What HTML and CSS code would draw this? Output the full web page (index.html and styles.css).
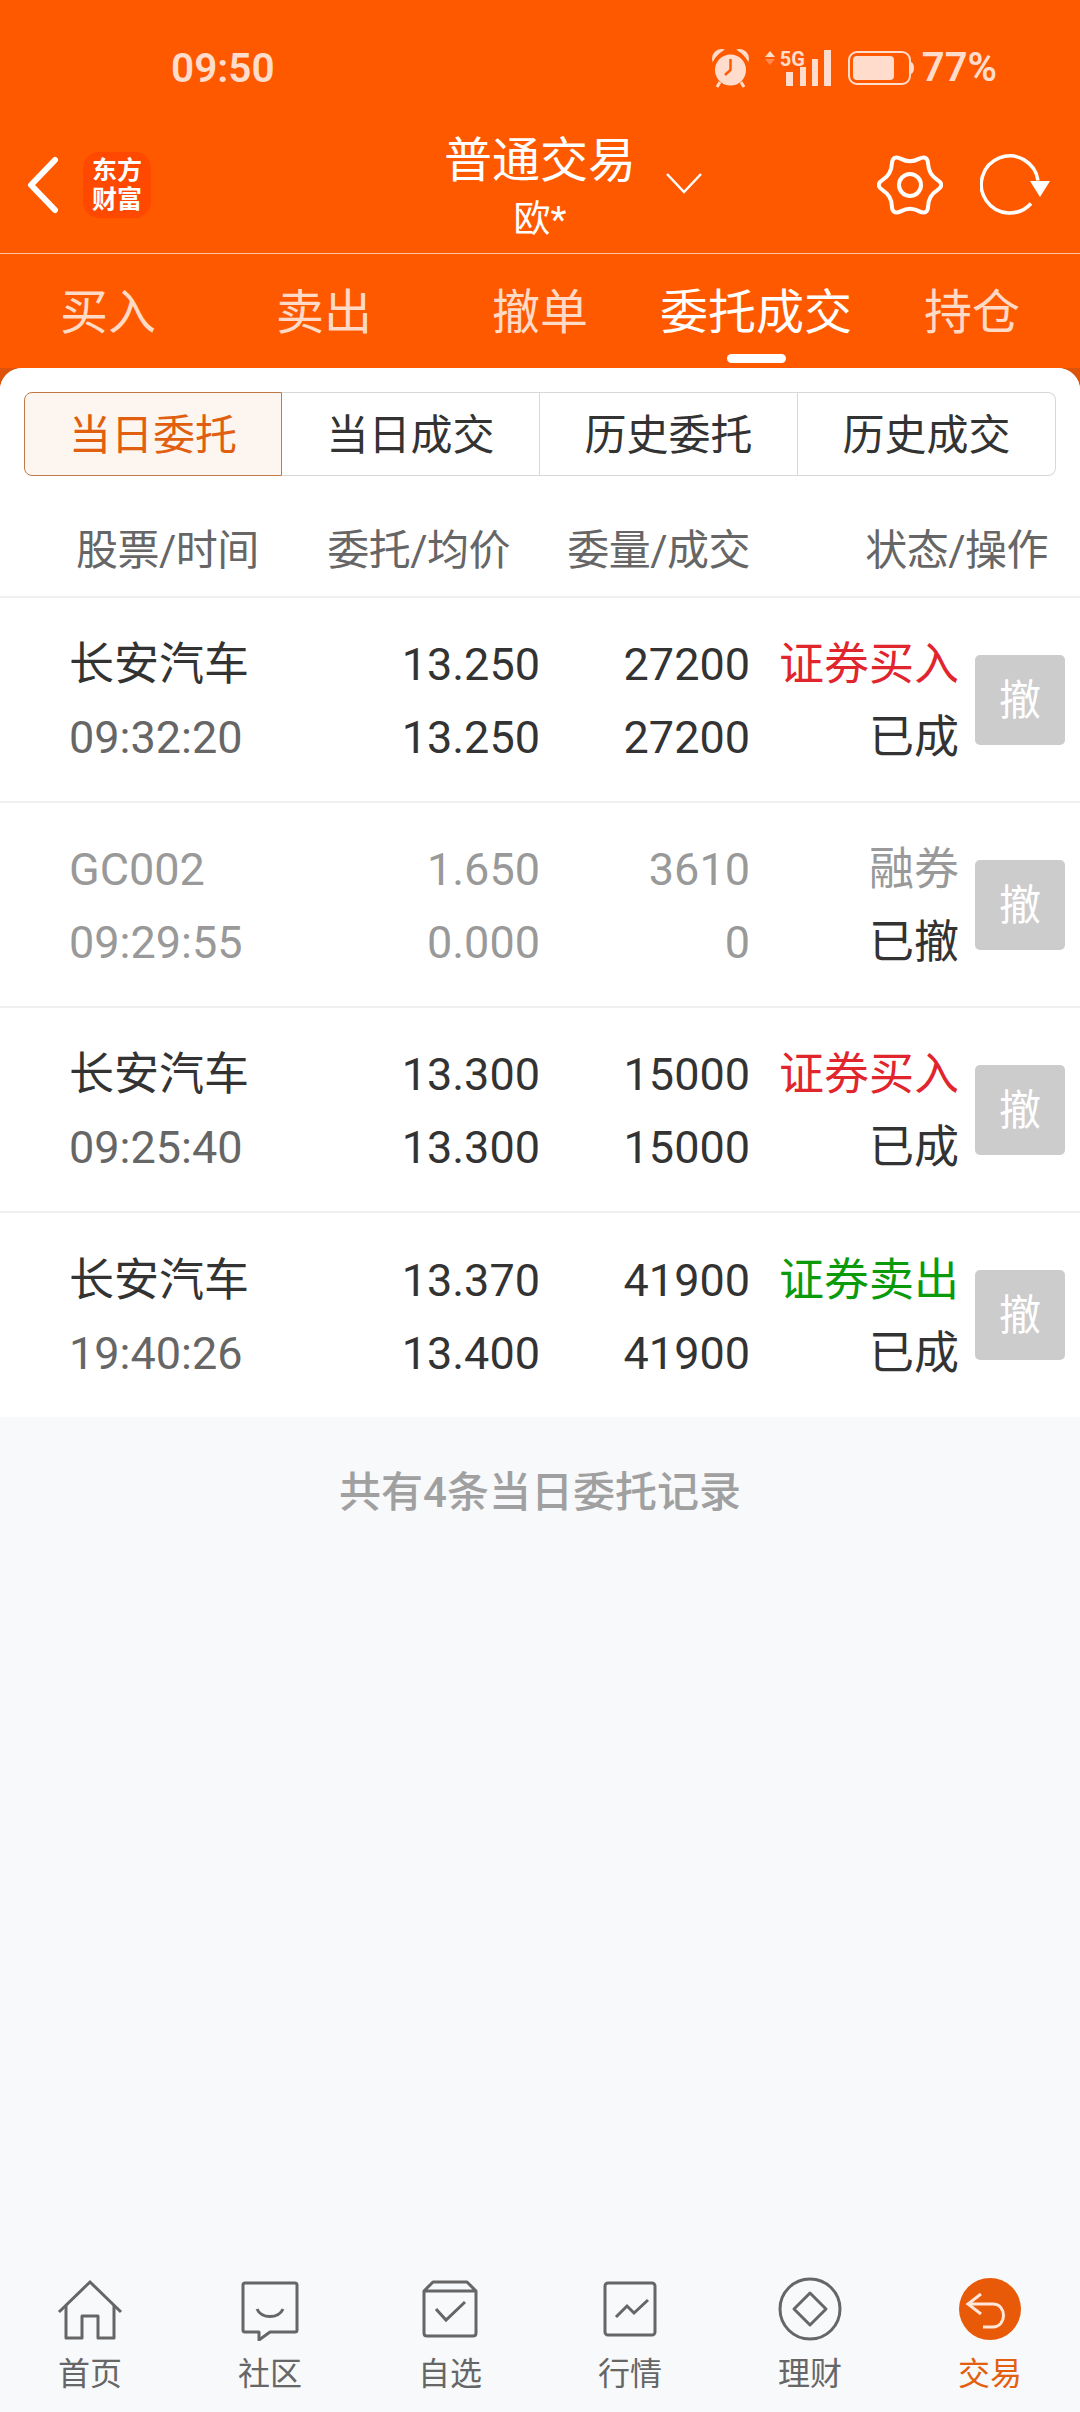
FILE: index.html
```html
<!DOCTYPE html>
<html lang="en">
<head>
    <meta charset="UTF-8">
    <title>普通交易</title>
    <link rel="stylesheet" href="styles.css">
</head>
<body>

<div class="app">
    <div class="top">
        <div class="status">
            <span class="time">09:50</span>
            <div class="status-icons">
                <svg width="37" height="39" viewBox="0 0 37 39">
                    <circle cx="18.5" cy="21" r="15.5" fill="#ffdccb"/>
                    <path d="M1 11 C0 5 5 0 11 1 C8 3 4 6 1 11 Z M36 11 C37 5 32 0 26 1 C29 3 33 6 36 11 Z" fill="#ffdccb" stroke="#ffdccb" stroke-width="1.5"/>
                    <path d="M8 33 L5 38 M29 33 L32 38" stroke="#ffdccb" stroke-width="3"/>
                    <path d="M18.5 10 V21 L13 26" fill="none" stroke="#ff5a00" stroke-width="2.5"/>
                </svg>
                <div class="signal">
                    <svg width="66" height="37" viewBox="0 0 66 37">
                        <path d="M0 7 L5 1 L10 7 Z" fill="#ffdccb"/>
                        <path d="M0 9 L5 15 L10 9 Z" fill="#ff8a4f"/>
                        <rect x="21" y="22" width="7" height="14" fill="#ffdccb"/>
                        <rect x="35" y="17" width="6" height="19" fill="#ffdccb"/>
                        <rect x="47" y="9" width="6" height="27" fill="#ffdccb"/>
                        <rect x="59" y="0" width="7" height="36" fill="#ffdccb"/>
                    </svg>
                    <span class="net">5G</span>
                </div>
                <svg width="67" height="34" viewBox="0 0 67 34">
                    <rect x="1" y="1" width="61" height="32" rx="8" fill="none" stroke="#ffdccb" stroke-width="2"/>
                    <rect x="5" y="5" width="41" height="24" rx="4" fill="#ffdccb"/>
                    <path d="M63 11 C67 12 67 22 63 23 Z" fill="#ffdccb"/>
                </svg>
                <span class="percent">77%</span>
            </div>
        </div>

        <div class="header">
            <div class="header-left">
                <svg width="34" height="58" viewBox="0 0 34 58">
                    <path d="M29 4 L5 29 L29 54" fill="none" stroke="#fff" stroke-width="6" stroke-linecap="round" stroke-linejoin="round"/>
                </svg>
                <div class="logo">东方<br>财富</div>
            </div>
            <div class="title">
                <div class="title-main">普通交易</div>
                <div class="title-sub">欧*</div>
            </div>
            <div class="header-right">
                <svg class="caret" width="38" height="22" viewBox="0 0 38 22">
                    <path d="M2 2 L19 20 L36 2" fill="none" stroke="#fff" stroke-width="2.5"/>
                </svg>
                <div class="header-icons">
                    <svg width="66" height="66" viewBox="0 0 66 66">
                        <path d="M60.06 38.37 Q68.5 33 60.06 27.63 Q51.62 22.25 51.18 12.26 Q50.75 2.26 41.88 6.88 Q33 11.5 24.12 6.88 Q15.25 2.26 14.82 12.26 Q14.38 22.25 5.94 27.63 Q-2.5 33 5.94 38.37 Q14.38 43.75 14.82 53.74 Q15.25 63.74 24.12 59.12 Q33 54.5 41.88 59.12 Q50.75 63.74 51.18 53.74 Q51.62 43.75 60.06 38.37 Z" fill="none" stroke="#fff" stroke-width="4"/>
                        <circle cx="33" cy="33" r="11" fill="none" stroke="#fff" stroke-width="4"/>
                    </svg>
                    <svg width="70" height="66" viewBox="0 0 70 66">
                        <path d="M51 51.5 A28.5 28.5 0 1 1 58 28.5" fill="none" stroke="#fff" stroke-width="3.5"/>
                        <path d="M50 29 H70 L60 45 Z" fill="#fff"/>
                    </svg>
                </div>
            </div>
        </div>

        <div class="tabs">
            <div class="tab">买入</div>
            <div class="tab">卖出</div>
            <div class="tab">撤单</div>
            <div class="tab active">委托成交</div>
            <div class="tab">持仓</div>
        </div>
    </div>

    <div class="sheet">
        <div class="segments">
            <div class="segment active">当日委托</div>
            <div class="segment">当日成交</div>
            <div class="segment">历史委托</div>
            <div class="segment">历史成交</div>
        </div>

        <div class="table-head">
            <span class="head-name">股票/时间</span>
            <span class="head-price">委托/均价</span>
            <span class="head-qty">委量/成交</span>
            <span class="head-state">状态/操作</span>
        </div>

        <div class="order">
            <div class="cell name"><span>长安汽车</span><span class="sub">09:32:20</span></div>
            <div class="cell num"><span>13.250</span><span>13.250</span></div>
            <div class="cell num"><span>27200</span><span>27200</span></div>
            <div class="cell num"><span class="buy">证券买入</span><span>已成</span></div>
            <div class="cancel">撤</div>
        </div>
        <div class="order muted">
            <div class="cell name"><span>GC002</span><span class="sub">09:29:55</span></div>
            <div class="cell num"><span>1.650</span><span>0.000</span></div>
            <div class="cell num"><span>3610</span><span>0</span></div>
            <div class="cell num"><span>融券</span><span class="done">已撤</span></div>
            <div class="cancel">撤</div>
        </div>
        <div class="order">
            <div class="cell name"><span>长安汽车</span><span class="sub">09:25:40</span></div>
            <div class="cell num"><span>13.300</span><span>13.300</span></div>
            <div class="cell num"><span>15000</span><span>15000</span></div>
            <div class="cell num"><span class="buy">证券买入</span><span>已成</span></div>
            <div class="cancel">撤</div>
        </div>
        <div class="order last">
            <div class="cell name"><span>长安汽车</span><span class="sub">19:40:26</span></div>
            <div class="cell num"><span>13.370</span><span>13.400</span></div>
            <div class="cell num"><span>41900</span><span>41900</span></div>
            <div class="cell num"><span class="sell">证券卖出</span><span>已成</span></div>
            <div class="cancel">撤</div>
        </div>

        <div class="summary">共有4条当日委托记录</div>
    </div>

    <div class="nav">
        <div class="nav-item">
            <svg width="70" height="64" viewBox="0 0 70 64">
                <path d="M4 35 L35 5 L66 35" fill="none" stroke="#666" stroke-width="3"/>
                <path d="M11 28 V61 H27 V39 H43 V61 H59 V28" fill="none" stroke="#666" stroke-width="3" stroke-linejoin="round"/>
            </svg>
            <span>首页</span>
        </div>
        <div class="nav-item">
            <svg width="70" height="64" viewBox="0 0 70 64">
                <path d="M10 6 H60 Q62 6 62 8 V53 Q62 55 60 55 H35 L24 63 V55 H10 Q8 55 8 53 V8 Q8 6 10 6 Z" fill="none" stroke="#666" stroke-width="3" stroke-linejoin="round"/>
                <path d="M22 32 C26 42 44 42 48 32" fill="none" stroke="#666" stroke-width="3"/>
            </svg>
            <span>社区</span>
        </div>
        <div class="nav-item">
            <svg width="70" height="64" viewBox="0 0 70 64">
                <path d="M9 14 L18 5 H52 L61 14 V56 Q61 59 58 59 H12 Q9 59 9 56 Z M9 14 H61" fill="none" stroke="#666" stroke-width="3" stroke-linejoin="round"/>
                <path d="M21 32 L31 43 L50 25" fill="none" stroke="#666" stroke-width="3"/>
            </svg>
            <span>自选</span>
        </div>
        <div class="nav-item">
            <svg width="70" height="64" viewBox="0 0 70 64">
                <rect x="10" y="6" width="50" height="52" rx="3" fill="none" stroke="#666" stroke-width="3"/>
                <path d="M21 40 L32 29 L39 36 L53 23" fill="none" stroke="#666" stroke-width="3"/>
            </svg>
            <span>行情</span>
        </div>
        <div class="nav-item">
            <svg width="70" height="64" viewBox="0 0 70 64">
                <circle cx="35" cy="32" r="30" fill="none" stroke="#666" stroke-width="3"/>
                <path d="M35 16 L51 32 L35 48 L19 32 Z" fill="none" stroke="#666" stroke-width="3" stroke-linejoin="round"/>
            </svg>
            <span>理财</span>
        </div>
        <div class="nav-item active">
            <svg width="70" height="64" viewBox="0 0 70 64">
                <circle cx="35" cy="32" r="31" fill="#e85a08"/>
                <path d="M26 17 L13 27 L26 37 M13 27 H38 C52 27 52 50 38 50 H28" fill="none" stroke="#ffe6d8" stroke-width="3"/>
            </svg>
            <span>交易</span>
        </div>
    </div>
</div>

</body>
</html>
```

FILE: styles.css
```css
* {
    box-sizing: border-box;
}
body {
    margin: 0;
    font-family: Roboto, "Noto Sans CJK SC", sans-serif;
    background: #f8f9fb;
}
.app {
    display: flex;
    flex-direction: column;
    height: 2412px;
    overflow: hidden;
    background: #dc5309;
}

/* orange top area */
.top {
    background: #ff5900;
    height: 368px;
    color: #fff;
}
.status {
    height: 130px;
    display: flex;
    justify-content: space-between;
    align-items: flex-start;
    padding: 48px 83px 0 171px;
    color: #ffdccb;
}
.time {
    font-size: 40.5px;
    font-weight: 600;
    line-height: 40px;
}
.status-icons {
    display: flex;
    align-items: center;
    height: 40px;
}
.status-icons > svg:first-child {
    margin-right: 16px;
}
.signal {
    position: relative;
    display: flex;
    margin-right: 17px;
}
.net {
    position: absolute;
    left: 15px;
    top: -1px;
    font-size: 20px;
    line-height: 20px;
    font-weight: 700;
    color: #ffdccb;
}
.signal + svg {
    margin-right: 7px;
}
.percent {
    font-size: 40px;
    font-weight: 600;
    line-height: 40px;
}
.header {
    height: 124px;
    padding-bottom: 13px;
    border-bottom: 1px solid #ffc7a8;
    display: grid;
    grid-template-columns: 1fr auto 1fr;
    grid-template-rows: 110px;
    align-items: center;
}
.header-left {
    display: flex;
    align-items: center;
    padding-left: 26px;
    gap: 23px;
}
.logo {
    width: 68px;
    height: 66px;
    background: #ff4800;
    border-radius: 16px;
    font-size: 25px;
    line-height: 29px;
    font-weight: 700;
    text-align: center;
    padding-top: 4px;
}
.title {
    padding-top: 8px;
    text-align: center;
}
.title-main {
    font-size: 48px;
    line-height: 62px;
}
.title-sub {
    font-size: 37px;
    line-height: 56px;
}
.header-right {
    display: flex;
    align-items: center;
    justify-content: space-between;
    padding-left: 29px;
    padding-right: 30px;
}
.caret {
    margin-top: -4px;
}
.header-icons {
    display: flex;
    gap: 37px;
}
.tabs {
    display: grid;
    grid-template-columns: repeat(5, 1fr);
    height: 114px;
}
.tab {
    position: relative;
    text-align: center;
    font-size: 48px;
    line-height: 118px;
    color: rgba(255,255,255,0.78);
}
.tab.active {
    color: #fff;
}
.tab.active::after {
    content: "";
    position: absolute;
    left: 50%;
    bottom: 9px;
    width: 59px;
    height: 9px;
    margin-left: -29px;
    background: #fff;
    border-radius: 5px;
}

/* white sheet */
.sheet {
    flex: 1;
    background: #f8f9fb;
    border-radius: 22px 22px 0 0;
    overflow: hidden;
}
.segments {
    background: #fff;
    padding: 24px 24px 22px;
    display: grid;
    grid-template-columns: repeat(4, 1fr);
}
.segment {
    height: 84px;
    line-height: 85px;
    text-align: center;
    font-size: 42px;
    color: #333;
    border: 1px solid #d8d8d8;
    border-left: none;
}
.segment:last-child {
    border-radius: 0 8px 8px 0;
}
.segment.active {
    color: #e0600f;
    background: #fdf5f0;
    border: 1px solid #c07a45;
    border-radius: 8px 0 0 8px;
}
.table-head {
    height: 100px;
    padding-bottom: 2px;
    background: #fff;
    border-bottom: 2px solid #f0f0f0;
    display: grid;
    grid-template-columns: 290px 220px 240px 298px;
    align-items: center;
    font-size: 42px;
    letter-spacing: -0.5px;
    color: #666;
}
.head-name {
    padding-left: 76px;
}
.head-price,
.head-qty,
.head-state {
    text-align: right;
}
.order {
    height: 205px;
    background: #fff;
    border-bottom: 2px solid #f0f0f0;
    display: grid;
    grid-template-columns: 330px 210px 210px 209px 90px;
    align-items: center;
    font-size: 45px;
    color: #333;
}
.order.last {
    height: 204px;
    border-bottom: none;
}
.cell {
    display: flex;
    flex-direction: column;
    padding-top: 3px;
    line-height: 73px;
}
.name {
    padding-left: 69px;
}
.num {
    align-items: flex-end;
}
.sub {
    color: #666;
}
.muted {
    color: #999;
}
.muted .sub {
    color: #999;
}
.done {
    color: #333;
}
.buy {
    color: #e1252d;
}
.sell {
    color: #0a9a0a;
}
.cancel {
    width: 90px;
    height: 90px;
    margin-left: 16px;
    background: #ccc;
    border-radius: 5px;
    color: #fff;
    font-size: 42px;
    line-height: 92px;
    text-align: center;
}
.summary {
    padding-top: 49px;
    text-align: center;
    font-size: 42px;
    line-height: 54px;
    font-weight: 500;
    color: #a0a0a0;
}

/* bottom nav */
.nav {
    height: 142px;
    background: #f8f9fb;
    display: grid;
    grid-template-columns: repeat(6, 1fr);
    padding-top: 7px;
}
.nav-item {
    display: flex;
    flex-direction: column;
    align-items: center;
    font-size: 32px;
    line-height: 44px;
    color: #666;
}
.nav-item span {
    margin-top: 11px;
}
.nav-item.active {
    color: #e2600f;
}
```
